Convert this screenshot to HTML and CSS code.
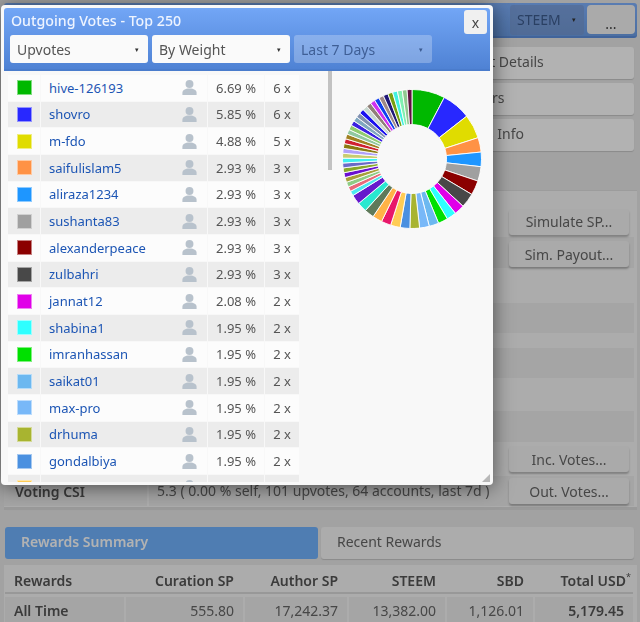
FILE: index.html
```html
<!DOCTYPE html>
<html lang="en">
<head>
<meta charset="utf-8">
<title>Outgoing Votes</title>
<link rel="stylesheet" href="styles.css">
</head>
<body>
<div class="page">
  <header class="topbar">
    <div class="select select-steem">STEEM<span class="caret">▾</span></div>
    <button class="more">...</button>
  </header>
  <nav class="menu">
    <div class="menu-item">Account Details</div>
    <div class="menu-item">Followers</div>
    <div class="menu-item">Witness Info</div>
  </nav>
  <section class="panel">
    <div class="band h31"><button class="btn">Simulate SP...</button></div>
    <div class="band h31 dark nudge"><button class="btn">Sim. Payout...</button></div>
    <div class="band h35"></div>
    <div class="band h30 dark"></div>
    <div class="band h15"></div>
    <div class="band h30 dark"></div>
    <div class="band h33"></div>
    <div class="band h31 dark"></div>
    <div class="band h34"><button class="btn">Inc. Votes...</button></div>
    <div class="band h30 dark">
      <div class="csi-label">Voting CSI</div>
      <div class="csi-value">5.3 ( 0.00 % self, 101 upvotes, 64 accounts, last 7d )</div>
      <button class="btn">Out. Votes...</button>
    </div>
  </section>
  <div class="tabs">
    <div class="tab active">Rewards Summary</div>
    <div class="tab">Recent Rewards</div>
  </div>
  <section class="rewards">
    <table>
      <thead>
        <tr><th class="left">Rewards</th><th>Curation SP</th><th>Author SP</th><th>STEEM</th><th>SBD</th><th>Total USD<sup>*</sup></th></tr>
      </thead>
      <tbody>
        <tr><td class="left strong">All Time</td><td>555.80</td><td>17,242.37</td><td>13,382.00</td><td>1,126.01</td><td class="strong">5,179.45</td></tr>
      </tbody>
    </table>
  </section>
</div>

<div class="overlay"></div>

<div class="modal">
  <div class="modal-head">
    <h1 class="modal-title">Outgoing Votes - Top 250</h1>
    <button class="close">x</button>
    <div class="modal-filters">
      <div class="select">Upvotes<span class="caret">▾</span></div>
      <div class="select">By Weight<span class="caret">▾</span></div>
      <div class="select disabled">Last 7 Days<span class="caret">▾</span></div>
    </div>
  </div>
  <div class="modal-body">
    <div class="list">
      <table class="votes">
        <tbody>
          <tr><td class="sw"><i class="c1"></i></td><td class="name"><div class="who"><span>hive-126193</span><svg viewBox="1 .7 14 14.8"><circle cx="8" cy="4.6" r="3.9"/><path d="M1 15.5v-2.2C1 10.6 3.6 9 8 9s7 1.6 7 4.3v2.2z"/></svg></div></td><td class="pct">6.69 %</td><td class="cnt">6 x</td></tr>
          <tr><td class="sw"><i class="c2"></i></td><td class="name"><div class="who"><span>shovro</span><svg viewBox="1 .7 14 14.8"><circle cx="8" cy="4.6" r="3.9"/><path d="M1 15.5v-2.2C1 10.6 3.6 9 8 9s7 1.6 7 4.3v2.2z"/></svg></div></td><td class="pct">5.85 %</td><td class="cnt">6 x</td></tr>
          <tr><td class="sw"><i class="c3"></i></td><td class="name"><div class="who"><span>m-fdo</span><svg viewBox="1 .7 14 14.8"><circle cx="8" cy="4.6" r="3.9"/><path d="M1 15.5v-2.2C1 10.6 3.6 9 8 9s7 1.6 7 4.3v2.2z"/></svg></div></td><td class="pct">4.88 %</td><td class="cnt">5 x</td></tr>
          <tr><td class="sw"><i class="c4"></i></td><td class="name"><div class="who"><span>saifulislam5</span><svg viewBox="1 .7 14 14.8"><circle cx="8" cy="4.6" r="3.9"/><path d="M1 15.5v-2.2C1 10.6 3.6 9 8 9s7 1.6 7 4.3v2.2z"/></svg></div></td><td class="pct">2.93 %</td><td class="cnt">3 x</td></tr>
          <tr><td class="sw"><i class="c5"></i></td><td class="name"><div class="who"><span>aliraza1234</span><svg viewBox="1 .7 14 14.8"><circle cx="8" cy="4.6" r="3.9"/><path d="M1 15.5v-2.2C1 10.6 3.6 9 8 9s7 1.6 7 4.3v2.2z"/></svg></div></td><td class="pct">2.93 %</td><td class="cnt">3 x</td></tr>
          <tr><td class="sw"><i class="c6"></i></td><td class="name"><div class="who"><span>sushanta83</span><svg viewBox="1 .7 14 14.8"><circle cx="8" cy="4.6" r="3.9"/><path d="M1 15.5v-2.2C1 10.6 3.6 9 8 9s7 1.6 7 4.3v2.2z"/></svg></div></td><td class="pct">2.93 %</td><td class="cnt">3 x</td></tr>
          <tr><td class="sw"><i class="c7"></i></td><td class="name"><div class="who"><span>alexanderpeace</span><svg viewBox="1 .7 14 14.8"><circle cx="8" cy="4.6" r="3.9"/><path d="M1 15.5v-2.2C1 10.6 3.6 9 8 9s7 1.6 7 4.3v2.2z"/></svg></div></td><td class="pct">2.93 %</td><td class="cnt">3 x</td></tr>
          <tr><td class="sw"><i class="c8"></i></td><td class="name"><div class="who"><span>zulbahri</span><svg viewBox="1 .7 14 14.8"><circle cx="8" cy="4.6" r="3.9"/><path d="M1 15.5v-2.2C1 10.6 3.6 9 8 9s7 1.6 7 4.3v2.2z"/></svg></div></td><td class="pct">2.93 %</td><td class="cnt">3 x</td></tr>
          <tr><td class="sw"><i class="c9"></i></td><td class="name"><div class="who"><span>jannat12</span><svg viewBox="1 .7 14 14.8"><circle cx="8" cy="4.6" r="3.9"/><path d="M1 15.5v-2.2C1 10.6 3.6 9 8 9s7 1.6 7 4.3v2.2z"/></svg></div></td><td class="pct">2.08 %</td><td class="cnt">2 x</td></tr>
          <tr><td class="sw"><i class="c10"></i></td><td class="name"><div class="who"><span>shabina1</span><svg viewBox="1 .7 14 14.8"><circle cx="8" cy="4.6" r="3.9"/><path d="M1 15.5v-2.2C1 10.6 3.6 9 8 9s7 1.6 7 4.3v2.2z"/></svg></div></td><td class="pct">1.95 %</td><td class="cnt">2 x</td></tr>
          <tr><td class="sw"><i class="c11"></i></td><td class="name"><div class="who"><span>imranhassan</span><svg viewBox="1 .7 14 14.8"><circle cx="8" cy="4.6" r="3.9"/><path d="M1 15.5v-2.2C1 10.6 3.6 9 8 9s7 1.6 7 4.3v2.2z"/></svg></div></td><td class="pct">1.95 %</td><td class="cnt">2 x</td></tr>
          <tr><td class="sw"><i class="c12"></i></td><td class="name"><div class="who"><span>saikat01</span><svg viewBox="1 .7 14 14.8"><circle cx="8" cy="4.6" r="3.9"/><path d="M1 15.5v-2.2C1 10.6 3.6 9 8 9s7 1.6 7 4.3v2.2z"/></svg></div></td><td class="pct">1.95 %</td><td class="cnt">2 x</td></tr>
          <tr><td class="sw"><i class="c13"></i></td><td class="name"><div class="who"><span>max-pro</span><svg viewBox="1 .7 14 14.8"><circle cx="8" cy="4.6" r="3.9"/><path d="M1 15.5v-2.2C1 10.6 3.6 9 8 9s7 1.6 7 4.3v2.2z"/></svg></div></td><td class="pct">1.95 %</td><td class="cnt">2 x</td></tr>
          <tr><td class="sw"><i class="c14"></i></td><td class="name"><div class="who"><span>drhuma</span><svg viewBox="1 .7 14 14.8"><circle cx="8" cy="4.6" r="3.9"/><path d="M1 15.5v-2.2C1 10.6 3.6 9 8 9s7 1.6 7 4.3v2.2z"/></svg></div></td><td class="pct">1.95 %</td><td class="cnt">2 x</td></tr>
          <tr><td class="sw"><i class="c15"></i></td><td class="name"><div class="who"><span>gondalbiya</span><svg viewBox="1 .7 14 14.8"><circle cx="8" cy="4.6" r="3.9"/><path d="M1 15.5v-2.2C1 10.6 3.6 9 8 9s7 1.6 7 4.3v2.2z"/></svg></div></td><td class="pct">1.95 %</td><td class="cnt">2 x</td></tr>
          <tr><td class="sw"><i class="c16"></i></td><td class="name"><div class="who"><span></span><svg viewBox="1 .7 14 14.8"><circle cx="8" cy="4.6" r="3.9"/><path d="M1 15.5v-2.2C1 10.6 3.6 9 8 9s7 1.6 7 4.3v2.2z"/></svg></div></td><td class="pct"></td><td class="cnt"></td></tr>
        </tbody>
      </table>
    </div>
    <div class="thumb"></div>
    <svg class="donut" id="donut" viewBox="0 0 144 144" width="144" height="144"></svg>
    <svg class="grip" viewBox="0 0 8 8" width="8" height="8"><path d="M8 0v8H0z"/></svg>
  </div>
</div>
<script src="script.js"></script>
</body>
</html>
```

FILE: styles.css
```css
* { box-sizing: border-box; }
html, body { margin: 0; height: 622px; overflow: hidden; }
body {
  position: relative;
  font-family: "Noto Sans", sans-serif;
  font-size: 14px;
  color: #666;
  background: #e8e8e8;
}
button { font: inherit; color: inherit; cursor: pointer; border: 0; }

/* Background page */
.page { padding: 3px 3px 0 4px; height: 622px; overflow: hidden; filter: blur(.35px); }
.topbar {
  height: 35px;
  display: flex;
  justify-content: flex-end;
  align-items: center;
  gap: 3px;
  padding-right: 2px;
  border-radius: 3px;
  background: linear-gradient(#80b2ff, #6d9fe8);
  border-bottom: 2px solid #5d90de;
}
.select {
  display: flex;
  align-items: center;
  justify-content: space-between;
  height: 28px;
  padding: 0 6px;
  font-size: 14px;
  color: #555;
  background: #fafafa;
  border-radius: 3px;
}
.caret { font-size: 7px; line-height: 1; color: #333; }
.select-steem {
  width: 74px;
  height: 30px;
  padding: 0 8px 0 7px;
  color: #3d5c8e;
  background: rgba(120, 150, 200, .55);
}
.more {
  width: 48px;
  height: 29px;
  background: #f4f4f4;
  color: #444;
  border-radius: 4px;
  padding: 7px 0 0;
}
.menu {
  display: flex;
  flex-direction: column;
  gap: 4px;
  margin: 9px 3px 0 0;
  padding-left: 340px;
}
.menu-item {
  height: 32px;
  padding: 0 0 0 98px;
  line-height: 29px;
  background: #fff;
  border-radius: 3px;
  box-shadow: 0 1px 1px rgba(0, 0, 0, .15);
}
.panel {
  margin: 39px 0 0;
  padding: 15px 3px 5px 0;
  height: 320px;
  background: #f6f6f6;
  border-top: 1px solid #e0e0e0;
  border-bottom: 3px solid #ddd;
}
.band { display: flex; align-items: center; justify-content: flex-end; padding-right: 5px; }
.band.dark { background: #ececec; }
.band.nudge { padding-top: 3px; }
.h15 { height: 15px; }
.h30 { height: 30px; }
.h31 { height: 31px; }
.h33 { height: 33px; }
.h34 { height: 34px; }
.h35 { height: 35px; }
.btn {
  width: 120px;
  height: 26px;
  flex: none;
  padding: 0;
  font-size: 14px;
  color: #666;
  background: #f4f4f4;
  border-radius: 3px;
  box-shadow: 0 2px 2px rgba(0, 0, 0, .25);
}
.csi-label {
  width: 142px;
  margin-left: 1px;
  padding-left: 10px;
  font-weight: 600;
  color: #555;
}
.csi-value { flex: 1; padding-left: 8px; border-left: 2px solid #f6f6f6; line-height: 30px; }
.tabs { display: flex; gap: 3px; margin: 17px 3px 0 1px; }
.tab {
  flex: 1;
  height: 32px;
  line-height: 29px;
  padding-left: 16px;
  color: #666;
  background: #f6f6f6;
  border-radius: 3px;
  box-shadow: 0 1px 1px rgba(0, 0, 0, .15);
}
.tab.active {
  color: #fff;
  font-weight: 600;
  background: #72b4ff;
  box-shadow: none;
}
.rewards { margin-top: 6px; padding: 3px 4px 0 1px; background: #f6f6f6; height: 60px; }
.rewards table { width: 100%; border-collapse: separate; border-spacing: 0; table-layout: fixed; }
.rewards th, .rewards td { text-align: right; padding: 0 9px; white-space: nowrap; }
.rewards th { height: 26px; font-weight: 600; color: #555; border-bottom: 2px solid #dadada; }
.rewards td { height: 30px; color: #666; background: #ececec; border-top: 3px solid #f6f6f6; border-left: 2px solid #f6f6f6; }
.rewards td:first-child { border-left: 0; }
.rewards th:nth-child(1) { width: 119px; }
.rewards th:nth-child(2) { width: 119px; }
.rewards th:nth-child(3) { width: 104px; }
.rewards th:nth-child(4) { width: 98px; }
.rewards th:nth-child(5) { width: 88px; }
.rewards .left { text-align: left; }
.rewards .strong { font-weight: 600; color: #555; }
.rewards sup { font-size: 9px; font-weight: 400; line-height: 0; margin-right: -7px; }

.overlay { position: absolute; inset: 0; background: rgba(0, 0, 0, .3); }

/* Modal window */
.modal {
  position: absolute;
  left: 1px;
  top: 5px;
  width: 492px;
  height: 480px;
  padding: 3px;
  display: flex;
  flex-direction: column;
  background: #f8f8f8;
  border-radius: 4px;
  box-shadow: 0 2px 20px rgba(0, 0, 0, .55);
  filter: blur(.25px);
}
.modal-head {
  position: relative;
  flex: none;
  height: 63px;
  padding: 2px 6px 0;
  background: linear-gradient(#72a6f6, #4f82d4);
  border-bottom: 2px solid #4a7ccc;
  border-radius: 3px 3px 0 0;
}
.modal-title {
  margin: 0 0 0 1px;
  font-size: 14.2px;
  line-height: 22px;
  font-weight: 500;
  color: #eef4ff;
}
.close {
  position: absolute;
  right: 3px;
  top: 2px;
  width: 23px;
  height: 24px;
  padding: 0;
  color: #444;
  background: #f0f0f0;
  border-radius: 3px;
}
.modal-filters { display: flex; gap: 4px; margin-top: 3px; }
.modal-filters .select { width: 138px; padding: 0 9px 0 7px; }
.modal-filters .disabled { color: #3f5f96; background: rgba(255, 255, 255, .25); }
.modal-filters .disabled .caret { color: #3a5a90; }
.modal-body { position: relative; flex: 1; min-height: 0; overflow: hidden; }
.list { height: 411px; overflow: hidden; padding: 3px 0 0 3px; }
.votes { border-collapse: separate; border-spacing: 1px; width: 293px; table-layout: fixed; }
.votes td { height: 25.67px; padding: 0; background: #fcfcfc; font-size: 13px; }
.votes tr:nth-child(even) td { background: #ececec; }
.sw { width: 32px; text-align: center; }
.sw i { display: block; width: 15px; height: 15px; margin: 0 auto; border: 1px solid rgba(255,255,255,.5); }
.who {
  display: flex;
  align-items: center;
  justify-content: space-between;
  padding: 0 10px 0 8px;
  color: #1c55b4;
}
.who svg { display: block; flex: none; width: 15px; height: 15px; fill: #b8c2cc; }
.votes .pct { width: 56px; text-align: center; color: #555; }
.votes .cnt { width: 34px; text-align: center; color: #555; }
.c1 { background: #00b800; } .c2 { background: #2828ff; } .c3 { background: #e0dc00; }
.c4 { background: #ff9245; } .c5 { background: #1e96ff; } .c6 { background: #a0a0a0; }
.c7 { background: #8b0000; } .c8 { background: #484848; } .c9 { background: #e000e8; }
.c10 { background: #2effff; } .c11 { background: #00e000; } .c12 { background: #6cb8f0; }
.c13 { background: #78b8f8; } .c14 { background: #a8b430; } .c15 { background: #4a90e0; }
.c16 { background: #ffcc55; }
.thumb {
  position: absolute;
  left: 324px;
  top: 0;
  width: 4px;
  height: 99px;
  background: #c2c2c2;
}
.donut { position: absolute; left: 336px; top: 16px; }
.grip { position: absolute; right: 0; bottom: 0; fill: #b8b8b8; }
```

FILE: script.js
```js
var big = [
  [6.69, "#00b800"], [5.85, "#2828ff"], [4.88, "#e0dc00"], [2.93, "#ff9245"], [2.93, "#1e96ff"],
  [2.93, "#a0a0a0"], [2.93, "#8b0000"], [2.93, "#484848"], [2.08, "#e000e8"], [1.95, "#2effff"],
  [1.95, "#00e000"], [1.95, "#6cb8f0"], [1.95, "#78b8f8"], [1.95, "#a8b430"], [1.95, "#4a90e0"],
  [1.95, "#ffcc55"], [1.95, "#e8186a"], [1.95, "#ffb347"], [1.95, "#5f7a5a"], [1.95, "#28e8d0"],
  [1.95, "#6619cc"]
];
var thin = ["#4de8f0", "#e86a7a", "#8fcc85", "#a8a03a", "#6b10d0", "#88a82a", "#6a6ac8", "#3ff0f0",
  "#c8cc70", "#b0a0f8", "#8a7a10", "#d02030", "#a08020", "#90c8a0", "#90cc70", "#3a20e0", "#80a8c0",
  "#8090b0", "#1a10f0", "#c8d8d0", "#908078", "#d030f0", "#1040f0", "#a08a88", "#201878", "#78a010",
  "#40f0e0", "#80f0b0", "#90c890", "#601040"];
var slices = big.concat(thin.map(function (c) { return [0.98, c]; }));
var total = slices.reduce(function (s, d) { return s + d[0]; }, 0);
var svg = document.getElementById("donut");
var NS = "http://www.w3.org/2000/svg";
var a = 0, cx = 72, cy = 72, R = 69.5, r = 34.5;
function pt(rad, ang) {
  return (cx + rad * Math.sin(ang)).toFixed(2) + " " + (cy - rad * Math.cos(ang)).toFixed(2);
}
slices.forEach(function (d) {
  var b = a + d[0] / total * Math.PI * 2;
  var p = document.createElementNS(NS, "path");
  p.setAttribute("d", "M" + pt(r, a) + "L" + pt(R, a) + "A" + R + " " + R + " 0 0 1 " + pt(R, b) +
    "L" + pt(r, b) + "A" + r + " " + r + " 0 0 0 " + pt(r, a) + "Z");
  p.setAttribute("fill", d[1]);
  p.setAttribute("stroke", "#fff");
  p.setAttribute("stroke-width", ".9");
  svg.appendChild(p);
  a = b;
});
```
